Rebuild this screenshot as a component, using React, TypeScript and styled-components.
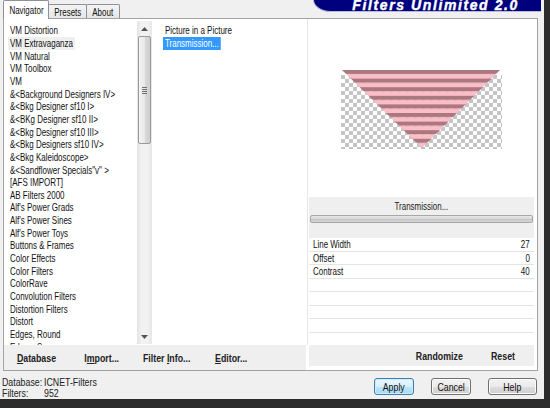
import React from "react";
import styled, { createGlobalStyle, css } from "styled-components";

const UI = `"Liberation Sans", Arial, sans-serif`;

const Global = createGlobalStyle`
  html, body { margin: 0; padding: 0; }
  body { background: #2c2c2c; font-family: ${UI}; }
  * { box-sizing: border-box; }
`;

/* The dialog's Tahoma-like face is narrow: squeeze text horizontally. */
const Squeeze = styled.span<{ $origin?: string; $sx?: number }>`
  display: inline-block;
  white-space: nowrap;
  transform: scaleX(${(p) => p.$sx ?? 0.76});
  transform-origin: ${(p) => p.$origin ?? "left"} center;
`;

const Window = styled.div`
  width: 544px;
  height: 399px;
  background: #f0f0f0;
  display: flex;
  flex-direction: column;
  font-family: ${UI};
  font-size: 10.5px;
  color: #111;
  overflow: hidden;
`;

const TopStrip = styled.div`
  height: 18px;
  display: flex;
  align-items: flex-start;
  position: relative;
  z-index: 2;
`;

const Tabs = styled.div`
  display: flex;
  align-items: flex-end;
  height: 18px;
  padding-left: 3px;
`;

const Tab = styled.div<{ $active?: boolean; $w: number }>`
  width: ${(p) => p.$w}px;
  display: flex;
  align-items: center;
  justify-content: center;
  border: 1px solid #8e9097;
  border-bottom: none;
  border-radius: 2px 2px 0 0;
  ${(p) =>
    p.$active
      ? css`
          height: 19px;
          margin-bottom: -1px;
          background: #fff;
          padding-bottom: 1px;
        `
      : css`
          height: 14px;
          background: linear-gradient(#f4f4f4, #e6e6e6);
          margin-left: -1px;
          padding-top: 1px;
        `}
`;

const Banner = styled.div`
  margin-left: auto;
  margin-right: 3px;
  width: 228px;
  height: 12px;
  background: #00007e;
  border-bottom-left-radius: 18px 12px;
  border-left: 1px solid #b9b9d6;
  border-bottom: 1px solid #b9b9d6;
  display: flex;
  justify-content: flex-end;
  overflow: hidden;
  padding-right: 22px;
`;

const BannerText = styled.span`
  font-family: "Liberation Sans", Arial, sans-serif;
  font-weight: 700;
  font-style: italic;
  font-size: 14px;
  line-height: 10px;
  letter-spacing: 1.6px;
  color: #fff;
  -webkit-text-stroke: 0.4px #fff;
  white-space: nowrap;
`;

const MainPanel = styled.div`
  margin-left: 3px;
  width: 535px;
  height: 354px;
  border: 1px solid #a3a3a3;
  background: #fff;
  display: flex;
`;

const LeftColumn = styled.div`
  width: 304px;
  display: flex;
  flex-direction: column;
`;

const ListArea = styled.div`
  height: 326px;
  display: flex;
`;

const CategoryList = styled.div`
  width: 133px;
  padding-top: 5.3px;
  overflow: hidden;
`;

const Item = styled.div<{ $indent: number }>`
  height: 12.67px;
  line-height: 12.67px;
  padding-left: ${(p) => p.$indent}px;
  white-space: nowrap;
  display: flex;
`;

const ItemLabel = styled.span<{ $state?: "hot" | "selected" }>`
  display: block;
  padding: 0 2.6px;
  height: 12.67px;
  transform: scaleX(0.76);
  transform-origin: left center;
  ${(p) =>
    p.$state === "hot" &&
    css`
      background: #efefef;
    `}
  ${(p) =>
    p.$state === "selected" &&
    css`
      background: #3399ff;
      color: #fff;
    `}
`;

const ScrollBar = styled.div`
  width: 15px;
  margin: 2px 0 1px;
  display: flex;
  flex-direction: column;
  background: linear-gradient(90deg, #e3e3e3, #f2f2f2 30%, #f2f2f2 70%, #e6e6e6);
`;

const ArrowButton = styled.div`
  height: 15px;
  display: flex;
  align-items: center;
  justify-content: center;
`;

const Track = styled.div`
  flex: 1;
  position: relative;
`;

const Thumb = styled.div`
  position: absolute;
  left: 1px;
  right: 1px;
  top: 0;
  height: 108px;
  border: 1px solid #9a9a9a;
  border-radius: 2px;
  background: linear-gradient(90deg, #f4f4f4, #e8e8e8 50%, #d9d9d9 51%, #cfcfcf);
  display: flex;
  align-items: center;
  justify-content: center;
`;

const Grip = styled.div`
  width: 5px;
  display: flex;
  flex-direction: column;
  gap: 1px;
  span {
    display: block;
    height: 1px;
    background: #6f6f6f;
  }
`;

const FilterList = styled.div`
  flex: 1;
  padding-top: 5.3px;
  border-right: 1px solid #e6e6e6;
`;

const ButtonBar = styled.div`
  height: 25px;
  margin: 0 2px 0 0;
  background: #efefef;
  display: flex;
`;

const BarButton = styled.div`
  width: 65px;
  display: flex;
  align-items: center;
  justify-content: center;
  font-weight: 700;
  font-size: 11px;
  color: #222;
  white-space: nowrap;
`;

const RightColumn = styled.div`
  flex: 1;
  display: flex;
  flex-direction: column;
  padding: 0 3px 0 1px;
`;

const Preview = styled.div`
  height: 178px;
  display: flex;
  align-items: flex-start;
  justify-content: center;
  padding-top: 51px;
`;

const TitleBand = styled.div`
  height: 41px;
  background: #efefef;
  display: flex;
  flex-direction: column;
  align-items: center;
  padding: 3px 1px 0;
`;

const FilterTitle = styled.div`
  height: 12px;
  line-height: 12px;
  color: #222;
`;

const ProgressGroove = styled.div`
  margin-top: 3px;
  width: 100%;
  height: 8px;
  border: 1px solid #a8a8a8;
  border-radius: 2px;
  background: linear-gradient(#e9e9e9, #d4d4d4 50%, #c6c6c6 51%, #d6d6d6);
`;

const ParamList = styled.div`
  height: 107px;
  display: flex;
  flex-direction: column;
`;

const ParamRow = styled.div`
  flex: 1;
  display: flex;
  align-items: center;
  justify-content: space-between;
  padding: 0 4px 0 4px;
  border-bottom: 1px solid #e4e4e4;
  &:last-child {
    border-bottom: none;
  }
`;

const ActionBar = styled.div`
  height: 21px;
  background: #efefef;
  display: flex;
  justify-content: flex-end;
`;

const ActionButton = styled.div`
  width: 63px;
  display: flex;
  align-items: center;
  justify-content: center;
  font-weight: 700;
  font-size: 11px;
  color: #222;
`;

const StatusRow = styled.div`
  flex: 1;
  display: flex;
  align-items: flex-start;
`;

const StatusInfo = styled.div`
  display: grid;
  grid-template-columns: 42px 60px;
  padding: 6px 0 0 2px;
  font-size: 11px;
  line-height: 11px;
  color: #222;
`;

const DialogButtons = styled.div`
  margin-left: auto;
  margin-right: 7px;
  margin-top: 7px;
  display: flex;
  gap: 17px;
`;

const DialogButton = styled.div<{ $default?: boolean; $w: number }>`
  width: ${(p) => p.$w}px;
  height: 17px;
  border-radius: 3px;
  display: flex;
  align-items: center;
  justify-content: center;
  font-size: 11px;
  color: #111;
  ${(p) =>
    p.$default
      ? css`
          border: 1px solid #3c7fb1;
          background: linear-gradient(#eaf6fd, #d9f0fc 50%, #bee6fd 51%, #a7d9f5);
          box-shadow: inset 0 0 0 1px #cfeaf9;
        `
      : css`
          border: 1px solid #707070;
          background: linear-gradient(#f2f2f2, #ebebeb 50%, #dddddd 51%, #cfcfcf);
          box-shadow: inset 0 0 0 1px #fbfbfb;
        `}
`;

const categories = [
  "VM Distortion",
  "VM Extravaganza",
  "VM Natural",
  "VM Toolbox",
  "VM",
  "&<Background Designers IV>",
  "&<Bkg Designer sf10 I>",
  "&<BKg Designer sf10 II>",
  "&<Bkg Designer sf10 III>",
  "&<Bkg Designers sf10 IV>",
  "&<Bkg Kaleidoscope>",
  '&<Sandflower Specials"v" >',
  "[AFS IMPORT]",
  "AB Filters 2000",
  "Alf's Power Grads",
  "Alf's Power Sines",
  "Alf's Power Toys",
  "Buttons & Frames",
  "Color Effects",
  "Color Filters",
  "ColorRave",
  "Convolution Filters",
  "Distortion Filters",
  "Distort",
  "Edges, Round",
  "Edges, Square",
];

const params = [
  { label: "Line Width", value: "27" },
  { label: "Offset", value: "0" },
  { label: "Contrast", value: "40" },
  { label: "", value: "" },
  { label: "", value: "" },
  { label: "", value: "" },
  { label: "", value: "" },
  { label: "", value: "" },
];

const UpArrow = () => (
  <svg width="7" height="4" viewBox="0 0 7 4">
    <polygon points="0,4 7,4 3.5,0" fill="#555" />
  </svg>
);
const DownArrow = () => (
  <svg width="7" height="4" viewBox="0 0 7 4">
    <polygon points="0,0 7,0 3.5,4" fill="#555" />
  </svg>
);

const PreviewImage = () => (
  <svg width="161" height="79" viewBox="0 0 161 79">
    <defs>
      <pattern id="chk" x="0" y="5" width="8" height="8" patternUnits="userSpaceOnUse">
        <rect width="8" height="8" fill="#ffffff" />
        <rect width="4" height="4" fill="#c5c5c5" />
        <rect x="4" y="4" width="4" height="4" fill="#c5c5c5" />
      </pattern>
      <pattern id="stripes" x="0" y="0" width="161" height="8.6" patternUnits="userSpaceOnUse">
        <rect width="161" height="4.3" fill="#ac777f" />
        <rect y="4.3" width="161" height="4.3" fill="#fbbdc6" />
      </pattern>
    </defs>
    <rect x="0" y="5" width="161" height="74" fill="url(#chk)" />
    <polygon points="1,0 159,0 81,78" fill="url(#stripes)" />
  </svg>
);

export default function App() {
  return (
    <>
      <Global />
      <Window>
        <TopStrip>
          <Tabs>
            <Tab $active $w={46}>
              <Squeeze $origin="center">Navigator</Squeeze>
            </Tab>
            <Tab $w={39}>
              <Squeeze $origin="center">Presets</Squeeze>
            </Tab>
            <Tab $w={34}>
              <Squeeze $origin="center">About</Squeeze>
            </Tab>
          </Tabs>
          <Banner>
            <BannerText>Filters Unlimited 2.0</BannerText>
          </Banner>
        </TopStrip>
        <MainPanel>
          <LeftColumn>
            <ListArea>
              <CategoryList>
                {categories.map((c, i) => (
                  <Item key={c} $indent={4}>
                    <ItemLabel $state={i === 1 ? "hot" : undefined}>{c}</ItemLabel>
                  </Item>
                ))}
              </CategoryList>
              <ScrollBar>
                <ArrowButton>
                  <UpArrow />
                </ArrowButton>
                <Track>
                  <Thumb>
                    <Grip>
                      <span />
                      <span />
                      <span />
                      <span />
                    </Grip>
                  </Thumb>
                </Track>
                <ArrowButton>
                  <DownArrow />
                </ArrowButton>
              </ScrollBar>
              <FilterList>
                <Item $indent={11}>
                  <ItemLabel>Picture in a Picture</ItemLabel>
                </Item>
                <Item $indent={11}>
                  <ItemLabel $state="selected">Transmission...</ItemLabel>
                </Item>
              </FilterList>
            </ListArea>
            <ButtonBar>
              <BarButton>
                <Squeeze $origin="center" $sx={0.8}>
                  <u>D</u>atabase
                </Squeeze>
              </BarButton>
              <BarButton>
                <Squeeze $origin="center" $sx={0.8}>
                  I<u>m</u>port...
                </Squeeze>
              </BarButton>
              <BarButton>
                <Squeeze $origin="center" $sx={0.8}>
                  {"Filter "}
                  <u>I</u>nfo...
                </Squeeze>
              </BarButton>
              <BarButton>
                <Squeeze $origin="center" $sx={0.8}>
                  <u>E</u>ditor...
                </Squeeze>
              </BarButton>
            </ButtonBar>
          </LeftColumn>
          <RightColumn>
            <Preview>
              <PreviewImage />
            </Preview>
            <TitleBand>
              <FilterTitle>
                <Squeeze $origin="center">Transmission...</Squeeze>
              </FilterTitle>
              <ProgressGroove />
            </TitleBand>
            <ParamList>
              {params.map((p, i) => (
                <ParamRow key={i}>
                  <Squeeze>{p.label}</Squeeze>
                  <Squeeze $origin="right">{p.value}</Squeeze>
                </ParamRow>
              ))}
            </ParamList>
            <ActionBar>
              <ActionButton>
                <Squeeze $origin="center" $sx={0.8}>
                  Randomize
                </Squeeze>
              </ActionButton>
              <ActionButton>
                <Squeeze $origin="center" $sx={0.8}>
                  Reset
                </Squeeze>
              </ActionButton>
            </ActionBar>
          </RightColumn>
        </MainPanel>
        <StatusRow>
          <StatusInfo>
            <Squeeze $sx={0.8}>Database:</Squeeze>
            <Squeeze $sx={0.8}>ICNET-Filters</Squeeze>
            <Squeeze $sx={0.8}>Filters:</Squeeze>
            <Squeeze $sx={0.8}>952</Squeeze>
          </StatusInfo>
          <DialogButtons>
            <DialogButton $default $w={40}>
              <Squeeze $origin="center" $sx={0.8}>
                Apply
              </Squeeze>
            </DialogButton>
            <DialogButton $w={40}>
              <Squeeze $origin="center" $sx={0.8}>
                Cancel
              </Squeeze>
            </DialogButton>
            <DialogButton $w={49}>
              <Squeeze $origin="center" $sx={0.8}>
                Help
              </Squeeze>
            </DialogButton>
          </DialogButtons>
        </StatusRow>
      </Window>
    </>
  );
}
